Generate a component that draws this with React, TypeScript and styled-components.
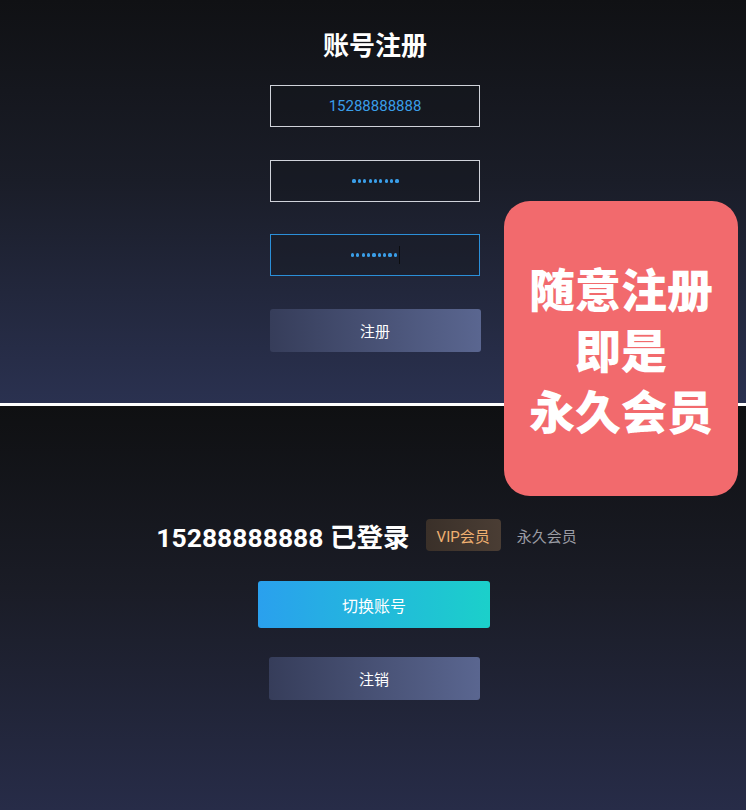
import React from "react";
import styled, { createGlobalStyle } from "styled-components";

const Global = createGlobalStyle`
  html, body { margin: 0; padding: 0; background: #101113; }
  body { font-family: Roboto, "Noto Sans CJK SC", sans-serif; }
  * { box-sizing: border-box; }
`;

const Page = styled.div`
  position: relative;
  width: 746px;
  height: 810px;
  display: flex;
  flex-direction: column;
  overflow: hidden;
`;

const TopPanel = styled.section`
  height: 403px;
  display: flex;
  flex-direction: column;
  align-items: center;
  padding-top: 28px;
  background: linear-gradient(180deg, #101114 0%, #1a1d28 45%, #2a3150 100%);
`;

const Divider = styled.div`
  height: 3px;
  background: #ffffff;
`;

const BottomPanel = styled.section`
  flex: 1;
  display: flex;
  flex-direction: column;
  align-items: center;
  padding-top: 113px;
  background: linear-gradient(180deg, #0f1012 0%, #1a1c26 45%, #272c48 100%);
`;

const Title = styled.h1`
  margin: 0 0 0 4px;
  height: 32px;
  line-height: 32px;
  font-size: 26px;
  font-weight: 700;
  color: #ffffff;
  font-family: "Noto Sans CJK SC", sans-serif;
`;

const Field = styled.div<{ $active?: boolean }>`
  width: 210px;
  height: 42px;
  margin-top: ${(p) => (p.$active ? 32 : 33)}px;
  margin-left: 4px;
  border: 1px solid ${(p) => (p.$active ? "#2b8fd8" : "#d0d3da")};
  background: rgba(20, 22, 30, 0.35);
  display: flex;
  align-items: center;
  justify-content: center;
  color: #3a9ee8;
  font-size: 15px;
  font-family: Roboto, sans-serif;
  &:first-of-type { margin-top: 25px; }
`;

const Dots = styled.span`
  display: flex;
  gap: 2.2px;
  align-items: center;
  margin-left: 1px;
`;

const Dot = styled.span`
  width: 3.2px;
  height: 3.2px;
  border-radius: 50%;
  background: #3a9ee8;
`;

const Caret = styled.span`
  width: 1px;
  height: 18px;
  background: #0c0d10;
`;

const GhostButton = styled.button<{ $mt: number; $ml: number }>`
  width: 211px;
  height: 43px;
  margin-top: ${(p) => p.$mt}px;
  margin-left: ${(p) => p.$ml}px;
  border: none;
  border-radius: 3px;
  background: linear-gradient(90deg, #363d5a 0%, #5a6690 100%);
  color: #ffffff;
  font-size: 15px;
  font-family: "Noto Sans CJK SC", sans-serif;
`;

const StatusRow = styled.div`
  height: 32px;
  display: flex;
  align-items: center;
  margin-right: 13px;
`;

const Account = styled.span`
  font-size: 26.5px;
  font-weight: 700;
  color: #ffffff;
  font-family: Roboto, "Noto Sans CJK SC", sans-serif;
`;

const VipBadge = styled.span`
  margin-left: 16px;
  height: 32px;
  padding: 0 11px 0 11px;
  border-radius: 4px;
  display: flex;
  align-items: center;
  background: linear-gradient(90deg, #3a3029 0%, #4a3d34 100%);
  color: #efb071;
  font-size: 15px;
  font-family: Roboto, "Noto Sans CJK SC", sans-serif;
`;

const Plain = styled.span`
  margin-left: 16px;
  color: #9a9ca4;
  font-size: 15px;
  font-family: "Noto Sans CJK SC", sans-serif;
`;

const PrimaryButton = styled.button`
  width: 232px;
  height: 47px;
  margin-top: 30px;
  margin-left: 2px;
  border: none;
  border-radius: 3px;
  background: linear-gradient(90deg, #2aa0ee 0%, #1bd0ca 100%);
  color: #ffffff;
  font-size: 16px;
  font-family: "Noto Sans CJK SC", sans-serif;
`;

const Promo = styled.div`
  position: absolute;
  left: 504px;
  top: 201px;
  width: 234px;
  height: 295px;
  border-radius: 26px;
  background: #f26a6d;
  display: flex;
  flex-direction: column;
  align-items: center;
  justify-content: center;
  color: #ffffff;
  font-size: 46px;
  font-weight: 900;
  line-height: 61px;
  font-family: "Noto Sans CJK SC", sans-serif;
  text-align: center;
`;

const PromoLine = styled.div``;

const PasswordDots = ({ caret }: { caret?: boolean }) => (
  <Dots>
    {Array.from({ length: 9 }).map((_, i) => (
      <Dot key={i} />
    ))}
    {caret && <Caret />}
  </Dots>
);

export default function App() {
  return (
    <Page>
      <Global />
      <TopPanel>
        <Title>账号注册</Title>
        <Field>15288888888</Field>
        <Field>
          <PasswordDots />
        </Field>
        <Field $active>
          <PasswordDots caret />
        </Field>
        <GhostButton $mt={33} $ml={4}>注册</GhostButton>
      </TopPanel>
      <Divider />
      <BottomPanel>
        <StatusRow>
          <Account>15288888888 已登录</Account>
          <VipBadge>VIP会员</VipBadge>
          <Plain>永久会员</Plain>
        </StatusRow>
        <PrimaryButton>切换账号</PrimaryButton>
        <GhostButton $mt={29} $ml={2}>注销</GhostButton>
      </BottomPanel>
      <Promo>
        <PromoLine>随意注册</PromoLine>
        <PromoLine>即是</PromoLine>
        <PromoLine>永久会员</PromoLine>
      </Promo>
    </Page>
  );
}
